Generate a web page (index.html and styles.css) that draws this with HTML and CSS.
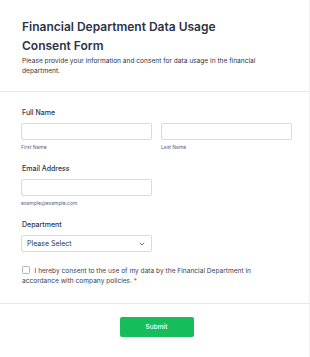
FILE: index.html
```html
<!DOCTYPE html>
<html lang="en">
<head>
<meta charset="utf-8">
<title>Financial Department Data Usage Consent Form</title>
<link rel="stylesheet" href="styles.css">
</head>
<body>
<div class="page">
  <header class="header">
    <h1 class="title">Financial Department Data Usage Consent Form</h1>
    <p class="subtitle">Please provide your information and consent for data usage in the financial department.</p>
  </header>
  <form class="form">
    <div class="field">
      <div class="label">Full Name</div>
      <div class="row">
        <div class="col">
          <div class="input"></div>
          <div class="sublabel">First Name</div>
        </div>
        <div class="col">
          <div class="input"></div>
          <div class="sublabel">Last Name</div>
        </div>
      </div>
    </div>
    <div class="field">
      <div class="label">Email Address</div>
      <div class="col half">
        <div class="input"></div>
        <div class="sublabel">example@example.com</div>
      </div>
    </div>
    <div class="field">
      <div class="label">Department</div>
      <div class="input select half">
        <span>Please Select</span>
        <svg class="chev" width="6" height="4" viewBox="0 0 6 4"><path d="M0.8 0.8 L3 3 L5.2 0.8" fill="none" stroke="#57647e" stroke-width="0.9"/></svg>
      </div>
    </div>
    <div class="consent required">
      <span class="box"></span>I hereby consent to the use of my data by the Financial Department in accordance with company policies.
    </div>
  </form>
  <div class="footer">
    <button class="submit" type="button">Submit</button>
  </div>
</div>
</body>
</html>
```
FILE: styles.css
```css
html, body {
  margin: 0;
  padding: 0;
  background: #ffffff;
}
body {
  font-family: Inter, "Noto Sans", sans-serif;
  color: #2c3345;
}
.page {
  width: 310px;
  min-height: 357px;
  border-right: 1px solid #f1f2f4;
  box-sizing: border-box;
}
.header {
  padding: 17px 22px 15px;
  border-bottom: 1px solid #e6e7ea;
}
.title {
  margin: 0;
  max-width: 240px;
  font-size: 12px;
  line-height: 19px;
  font-weight: 600;
  color: #2c3345;
}
.subtitle {
  margin: 1px 0 0;
  font-size: 6.6px;
  line-height: 10px;
  color: #2c3345;
}
.form {
  padding: 16px 17px 17px 21px;
  display: flex;
  flex-direction: column;
}
.field {
  margin-bottom: 13.5px;
}
.label {
  font-size: 7px;
  line-height: 10px;
  font-weight: 500;
  margin: 0 0 5px 1px;
}
.row {
  display: flex;
  gap: 9px;
}
.col {
  flex: 1;
}
.half {
  width: 131px;
}
.input {
  height: 17px;
  box-sizing: border-box;
  border: 1px solid #d8dbe2;
  border-radius: 2px;
  background: #fff;
}
.sublabel {
  margin-top: 3.5px;
  font-size: 5px;
  line-height: 7px;
  color: #57647e;
}
.select {
  display: flex;
  align-items: center;
  justify-content: space-between;
  padding: 0 6px 0 5px;
  font-size: 7px;
  color: #2c3345;
}
.chev {
  display: block;
}
.field:last-of-type {
  margin-bottom: 18px;
}
.consent {
  font-size: 6.6px;
  line-height: 10px;
  color: #3a4152;
  padding-left: 1px;
  width: 240px;
}
.required::after {
  content: "*";
  color: #f23a3c;
}
.box {
  display: inline-block;
  width: 8px;
  height: 8px;
  box-sizing: border-box;
  border: 1px solid #aeb3bf;
  border-radius: 1.5px;
  vertical-align: -1.5px;
  margin-right: 4.5px;
}
.footer {
  border-top: 1px solid #e6e7ea;
  padding: 13px 17px 0 21px;
  display: flex;
  justify-content: center;
}
.submit {
  width: 74px;
  height: 20px;
  border: none;
  border-radius: 2px;
  background: #18bd5b;
  color: #ffffff;
  font-family: Inter, sans-serif;
  font-size: 6.5px;
  font-weight: 500;
  padding: 0;
}
```
